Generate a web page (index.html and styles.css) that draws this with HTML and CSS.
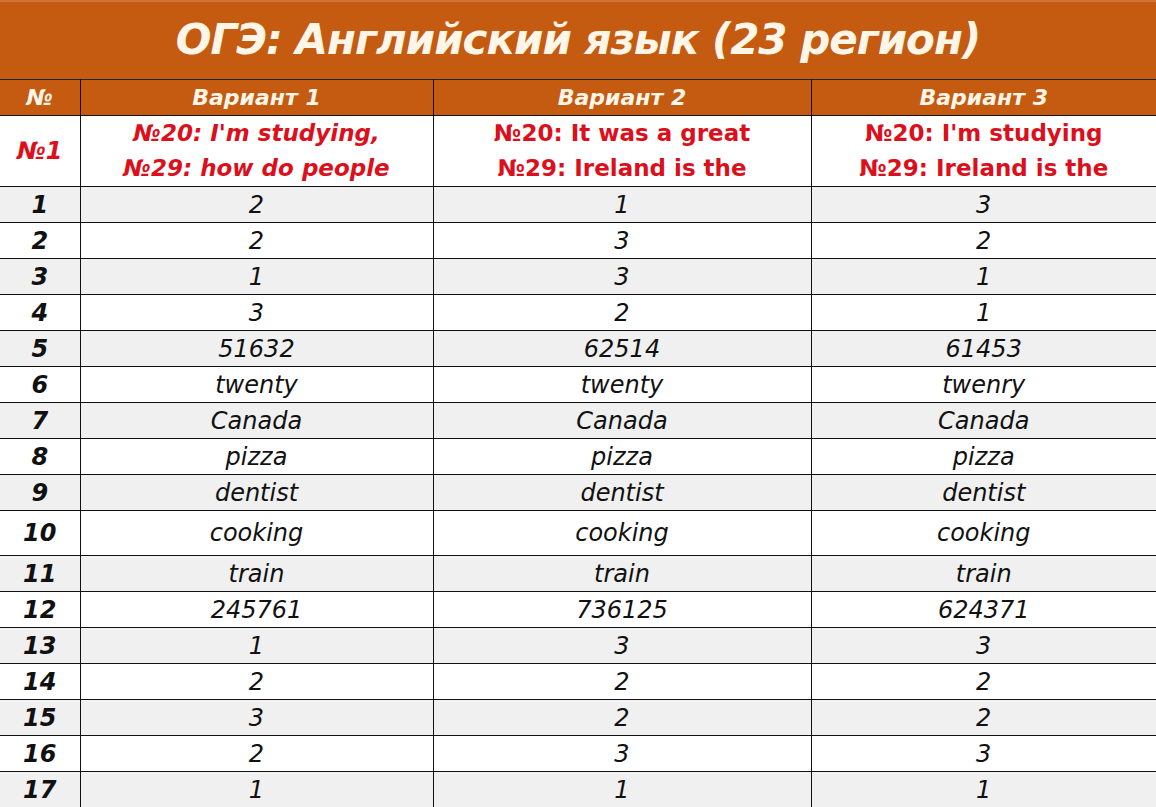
FILE: index.html
```html
<!DOCTYPE html>
<html lang="ru">
<head>
<meta charset="utf-8">
<title>ОГЭ: Английский язык (23 регион)</title>
<link rel="stylesheet" href="styles.css">
</head>
<body>
<div class="sheet">
  <div class="title">ОГЭ: Английский язык (23 регион)</div>
  <table class="answers">
    <colgroup>
      <col class="c-num"><col class="c-v1"><col class="c-v2"><col class="c-v3">
    </colgroup>
    <thead>
      <tr class="head">
        <th>№</th><th>Вариант 1</th><th>Вариант 2</th><th>Вариант 3</th>
      </tr>
    </thead>
    <tbody>
      <tr class="topic">
        <td class="n red">№1</td>
        <td class="red it">№20: I'm studying,<br>№29: how do people</td>
        <td class="red">№20: It was a great<br>№29: Ireland is the</td>
        <td class="red">№20: I'm studying<br>№29: Ireland is the</td>
      </tr>
      <tr class="g"><td class="n">1</td><td>2</td><td>1</td><td>3</td></tr>
      <tr><td class="n">2</td><td>2</td><td>3</td><td>2</td></tr>
      <tr class="g"><td class="n">3</td><td>1</td><td>3</td><td>1</td></tr>
      <tr><td class="n">4</td><td>3</td><td>2</td><td>1</td></tr>
      <tr class="g"><td class="n">5</td><td>51632</td><td>62514</td><td>61453</td></tr>
      <tr><td class="n">6</td><td>twenty</td><td>twenty</td><td>twenry</td></tr>
      <tr class="g"><td class="n">7</td><td>Canada</td><td>Canada</td><td>Canada</td></tr>
      <tr><td class="n">8</td><td>pizza</td><td>pizza</td><td>pizza</td></tr>
      <tr class="g"><td class="n">9</td><td>dentist</td><td>dentist</td><td>dentist</td></tr>
      <tr class="tall"><td class="n">10</td><td>cooking</td><td>cooking</td><td>cooking</td></tr>
      <tr class="g"><td class="n">11</td><td>train</td><td>train</td><td>train</td></tr>
      <tr><td class="n">12</td><td>245761</td><td>736125</td><td>624371</td></tr>
      <tr class="g"><td class="n">13</td><td>1</td><td>3</td><td>3</td></tr>
      <tr><td class="n">14</td><td>2</td><td>2</td><td>2</td></tr>
      <tr class="g"><td class="n">15</td><td>3</td><td>2</td><td>2</td></tr>
      <tr><td class="n">16</td><td>2</td><td>3</td><td>3</td></tr>
      <tr class="g"><td class="n">17</td><td>1</td><td>1</td><td>1</td></tr>
    </tbody>
  </table>
</div>
</body>
</html>
```
FILE: styles.css
```css
html, body {
  margin: 0;
  padding: 0;
  background: #ffffff;
}
body {
  width: 1156px;
  height: 807px;
  overflow: hidden;
  font-family: "DejaVu Sans", "Liberation Sans", sans-serif;
}
.sheet {
  width: 1156px;
}
.title {
  height: 79px;
  box-sizing: border-box;
  border-top: 2px solid #d2733a;
  background: #c55a11;
  color: #fff6e8;
  font-weight: bold;
  font-style: italic;
  font-size: 42px;
  letter-spacing: -1px;
  display: flex;
  align-items: center;
  justify-content: center;
  padding-bottom: 2px;
}
.answers {
  width: 1156px;
  border-collapse: collapse;
  table-layout: fixed;
}
.c-num { width: 80px; }
.c-v1 { width: 353px; }
.c-v2 { width: 378px; }
.c-v3 { width: 345px; }
.answers th,
.answers td {
  border: 1px solid #111;
  padding: 0;
  text-align: center;
  vertical-align: middle;
}
.answers tr:first-child th { border-top: 1px solid #222; }
.answers td:last-child, .answers th:last-child { border-right: 0; }
.answers td:first-child, .answers th:first-child { border-left: 0; }
.head th {
  height: 35px;
  background: #c55a11;
  color: #fff6e8;
  font-weight: bold;
  font-style: italic;
  font-size: 22px;
}
tbody tr td {
  height: 35px;
  font-style: italic;
  font-size: 24px;
  color: #111;
}
tbody tr.topic td {
  height: 69px;
  background: #ffffff;
  font-weight: bold;
  font-style: normal;
  font-size: 23px;
  line-height: 35px;
}
tbody tr.topic td.red { color: #dc0f1c; }
tbody tr.topic td.it { font-style: italic; }
tbody tr.topic td.n { font-style: italic; font-size: 24px; }
tbody tr.g td { background: #f0f0f0; }
tbody tr.tall td { height: 44px; }
tbody tr td.n {
  font-weight: bold;
  font-style: italic;
}
```
